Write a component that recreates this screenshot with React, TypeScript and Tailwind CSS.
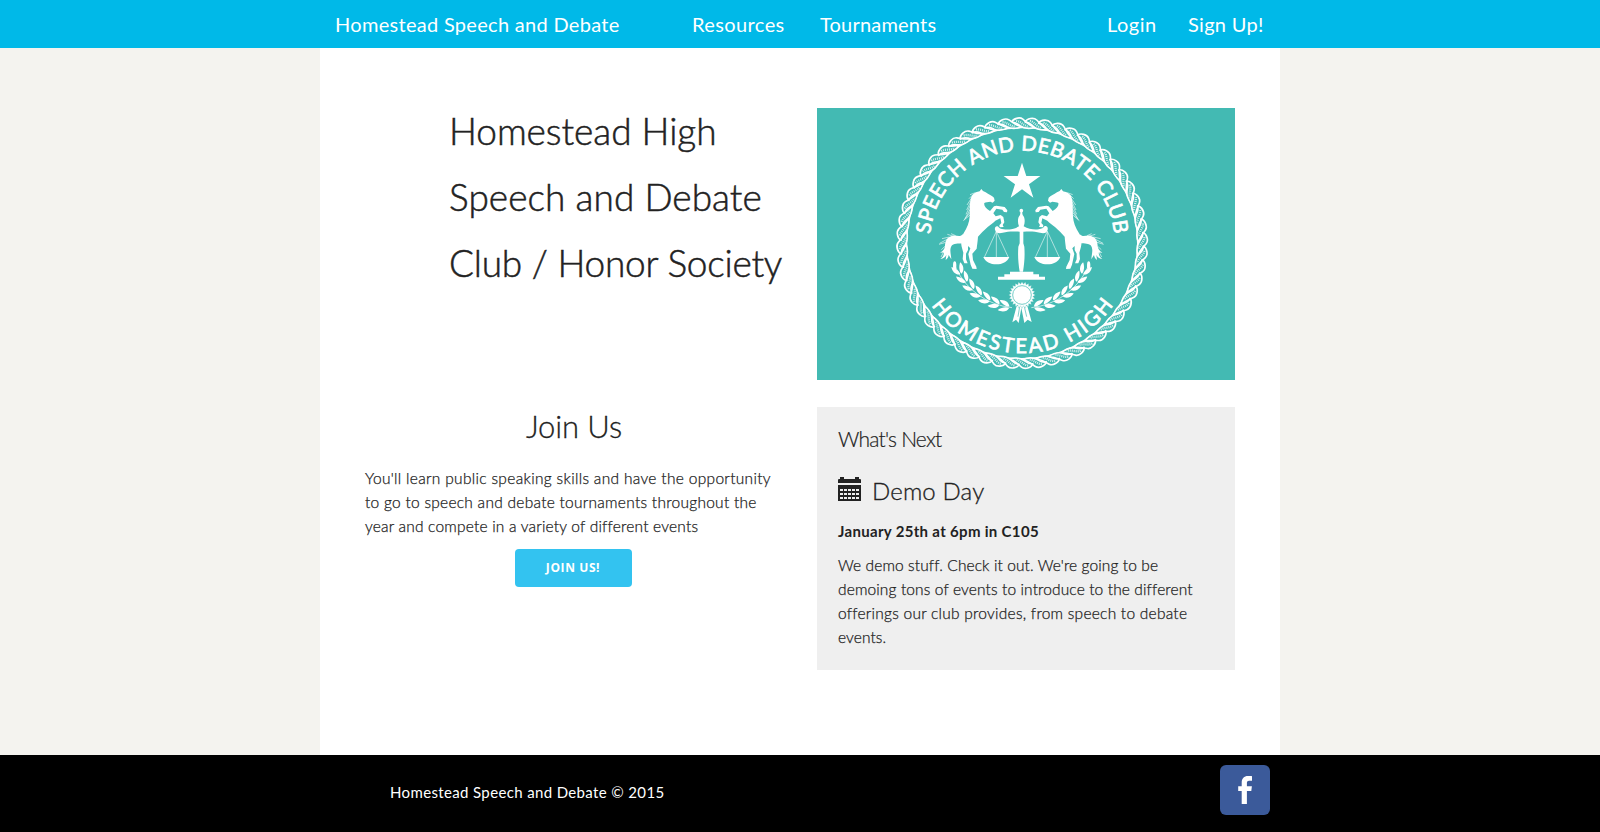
import type { ReactNode } from 'react';

const CX = 636.5;
const CY = 429.5;

function Rope() {
  const count = 56;
  return (
    <g>
      <circle cx={CX} cy={CY} r="347" fill="none" stroke="#fff" strokeWidth="5" />
      {Array.from({ length: count }, (_, i) => (
        <g key={i} transform={`translate(${CX} ${CY}) rotate(${(i * 360) / count})`}>
          <path
            d="M-32 -362 C-28 -374 -8 -380 2 -372 C14 -362 22 -352 38 -347 C22 -343 4 -345 -6 -352 C-14 -358 -20 -364 -32 -362 Z"
            fill="#43bab3"
            stroke="#fff"
            strokeWidth="5"
            strokeLinejoin="round"
          />
          <path d="M-18 -367 C-4 -366 4 -352 20 -349" fill="none" stroke="#fff" strokeWidth="7" strokeDasharray="3 3" opacity="0.8" />
        </g>
      ))}
    </g>
  );
}

function Horse() {
  return (
    <g fill="#fff">
      <path d="M514 267 L519 273 L527 277 C536 284 546 287 552 293 L554 302 L548 308 L541 305 C534 307 527 305 523 309 C521 318 527 325 540 333 L552 319 L559 317 L584 321 L592 331 L591 337 L582 336 L577 329 L559 326 L550 340 L557 349 L572 345 L580 351 L583 367 L578 375 L581 381 L569 382 L568 376 L574 369 L571 355 L556 362 C549 369 541 374 533 381 C522 391 513 400 504 410 C503 425 501 436 500 446 L487 461 L489 480 L499 500 L500 507 L487 506 L482 494 L475 462 L481 445 L474 438 L474 450 L468 461 L468 478 L473 490 L463 490 L458 477 L460 458 L455 440 C452 427 453 412 460 401 C472 383 478 366 479 350 C480 329 478 304 485 289 C491 278 502 275 509 274 Z" />
      <path d="M459 402 C448 415 439 402 425 408 C410 412 405 425 405 439 C402 452 396 454 391 458 C398 457 401 457 402 458 C401 468 397 473 391 477 C401 475 407 470 409 464 L407 480 C414 475 415 470 416 465 L424 478 C423 462 417 448 426 436 C436 427 449 433 460 428 Z" />
      <path
        d="M489 284 L477 296 M486 292 L471 315 M483 303 L470 330 M482 314 L468 343 M481 327 L465 356 M480 337 L463 359 M480 345 L460 362 M496 278 L480 284 M428 408 L412 403 M437 407 L423 401 M418 411 L396 416 M411 418 L389 430 M407 427 L387 433 M405 439 L394 449 M403 452 L393 471"
        fill="none"
        stroke="#fff"
        strokeWidth="1.8"
      />
    </g>
  );
}

function Laurel() {
  const pairs = [0, 1, 2, 3, 4, 5, 6];
  return (
    <g fill="#fff">
      <path d="M436 500 A210 201 0 0 0 606 623" fill="none" stroke="#fff" strokeWidth="2" />
      <ellipse cx="434" cy="497" rx="5" ry="13" />
      {pairs.map((i) => {
        const deg = 152 - i * 8.4;
        const a = (deg * Math.PI) / 180;
        const x = 636 + 210 * Math.cos(a);
        const y = 424 + 201 * Math.sin(a);
        return (
          <g key={i} transform={`translate(${x} ${y}) rotate(${deg + 90})`}>
            <path d="M-4 2 C4 -1 20 5 28 15 C14 20 -1 14 -4 2 Z" />
            <path d="M-4 -2 C4 1 20 -5 28 -15 C14 -20 -1 -14 -4 -2 Z" />
          </g>
        );
      })}
    </g>
  );
}

function Scales() {
  return (
    <g fill="#fff">
      <circle cx="634" cy="332" r="5.5" />
      <path d="M632 335 H636 L638 345 C645 352 646 366 641 379 C655 388 674 390 686 388 C695 386 701 384 703 379 C709 376 715 381 713 389 C711 400 700 401 690 398 C672 393 656 394 640 395 L640 430 L643 440 C645 468 643 490 639 515 H629 C625 490 623 468 625 440 L629 430 L629 395 C612 394 596 393 578 398 C568 401 557 400 555 389 C553 381 559 376 565 380 C567 385 573 387 581 388 C594 390 613 388 627 379 C622 366 623 352 630 345 Z" />
      <path d="M600 515 H670 V523 H687 V530 H705 V539 H564 V530 H583 V523 H600 Z" />
      {[559, 712].map((x) => (
        <g key={x}>
          <path d={`M${x - 36} 472 L${x} 394 L${x + 36} 472 M${x} 394 V472`} fill="none" stroke="#fff" strokeWidth="1.7" />
          <path d={`M${x - 39} 471 H${x + 39} C${x + 33} 486 ${x + 18} 493 ${x} 493 C${x - 18} 493 ${x - 33} 486 ${x - 39} 471 Z`} />
        </g>
      ))}
    </g>
  );
}

function starPoints(cx: number, cy: number, n: number, outer: number, inner: number) {
  return Array.from({ length: n * 2 }, (_, i) => {
    const r = i % 2 === 0 ? outer : inner;
    const a = (Math.PI * i) / n - Math.PI / 2;
    return `${cx + r * Math.cos(a)},${cy + r * Math.sin(a)}`;
  }).join(' ');
}

function Crest() {
  return (
    <svg className="block h-[272px] w-[418px] bg-[#43bab3]" viewBox="21 24 1254 816" role="img">
      <defs>
        <path id="arc-top" d="M359 429.5 A277.5 277.5 0 0 1 914 429.5" />
        <path id="arc-bottom" d="M306.5 429.5 A330 330 0 0 0 966.5 429.5" />
      </defs>
      <Rope />
      <g className="font-['Lato',sans-serif]" fill="#fff" stroke="#fff" strokeWidth="2.2" fontSize="61">
        <text textLength="818" lengthAdjust="spacing">
          <textPath href="#arc-top" startOffset="27" textLength="818" lengthAdjust="spacing">SPEECH AND DEBATE CLUB</textPath>
        </text>
        <text textLength="642" lengthAdjust="spacing">
          <textPath href="#arc-bottom" startOffset="198" textLength="642" lengthAdjust="spacing">HOMESTEAD HIGH</textPath>
        </text>
      </g>
      <polygon points={starPoints(636, 246, 5, 58, 22)} fill="#fff" />
      <Horse />
      <g transform="translate(1268 0) scale(-1 1)">
        <Horse />
      </g>
      <Scales />
      <Laurel />
      <g transform="translate(1270 0) scale(-1 1)">
        <Laurel />
      </g>
      <g fill="#fff">
        <path d="M620 618 L607 667 L618 659 L626 669 L634 624 L643 669 L653 659 L665 666 L652 618 Z" />
        <path d="M629 620 L624 650 M643 620 L650 650" stroke="#43bab3" strokeWidth="2" />
        <polygon points={starPoints(636, 585, 24, 40, 33)} stroke="#43bab3" strokeWidth="1" />
        <circle cx="636" cy="585" r="28" fill="none" stroke="#43bab3" strokeWidth="2.2" />
      </g>
    </svg>
  );
}

function CalendarIcon() {
  return (
    <svg className="mt-[2px] block h-6 w-[23px] shrink-0" viewBox="0 0 23 24" fill="#222">
      <path d="M2 0h4v2h11V0h4v2h1a1 1 0 0 1 1 1v3H0V3a1 1 0 0 1 1-1h1z" />
      <path
        fillRule="evenodd"
        d="M0 8h23v16H0zM2 12v2h3v-2zM6 12v2h3v-2zM10 12v2h3v-2zM14 12v2h3v-2zM18 12v2h3v-2zM2 16v2h3v-2zM6 16v2h3v-2zM10 16v2h3v-2zM14 16v2h3v-2zM18 16v2h3v-2zM2 20v2h3v-2zM6 20v2h3v-2zM10 20v2h3v-2zM14 20v2h3v-2zM18 20v2h3v-2z"
      />
    </svg>
  );
}

function Line({ className, children }: { className: string; children: ReactNode }) {
  return <span className={`block whitespace-nowrap ${className}`}>{children}</span>;
}

export default function App() {
  return (
    <div className="flex h-[832px] flex-col bg-[#f4f3ef] font-['Lato',sans-serif] text-[#222]">
      <nav className="h-12 bg-[#00b9e8]">
        <div className="mx-auto flex h-12 w-[960px] pl-[15px] text-xl leading-[48px] whitespace-nowrap text-white">
          <a className="w-[357px] tracking-[0.3px]">Homestead Speech and Debate</a>
          <a className="w-[128px] tracking-[0.4px]">Resources</a>
          <a className="w-[287px] tracking-[0.2px]">Tournaments</a>
          <a className="w-[81px] tracking-[0.5px]">Login</a>
          <a className="tracking-[0.3px]">Sign Up!</a>
        </div>
      </nav>

      <main className="mx-auto flex h-[707px] w-[960px] gap-[34px] bg-white pl-[45px]">
        <section className="w-[418px]">
          <h1 className="pt-[50px] pl-[84px] text-[37px] leading-[66px] font-light [-webkit-text-stroke:0.5px_#222]">
            <Line className="tracking-[-0.05px]">Homestead High</Line>
            <Line className="tracking-[0.05px]">Speech and Debate</Line>
            <Line className="tracking-[-0.23px]">Club / Honor Society</Line>
          </h1>
          <h2 className="mt-[112px] text-center text-[31px] leading-9 font-light tracking-[-0.1px] [-webkit-text-stroke:0.3px_#222]">Join Us</h2>
          <p className="mt-[22px] text-[15.5px] leading-6 font-light [-webkit-text-stroke:0.25px_#222]">
            <Line className="tracking-[0.32px]">You'll learn public speaking skills and have the opportunity</Line>
            <Line className="tracking-[0.27px]">to go to speech and debate tournaments throughout the</Line>
            <Line className="tracking-[0.2px]">year and compete in a variety of different events</Line>
          </p>
          <div className="mt-[11px] flex justify-center pr-[2px]">
            <button className="h-[38px] w-[117px] rounded bg-[#33c3f0] font-['Open_Sans',sans-serif] text-xs font-bold tracking-[0.6px] text-white">
              JOIN US!
            </button>
          </div>
        </section>

        <section className="w-[418px] pt-[60px]">
          <Crest />
          <div className="mt-[27px] h-[263px] bg-[#efefef] pt-[18px] pl-[21px]">
            <h5 className="text-[21px] leading-7 font-light tracking-[-0.8px] [-webkit-text-stroke:0.2px_#222]">What's Next</h5>
            <div className="mt-[22px] flex h-[30px]">
              <CalendarIcon />
              <h4 className="mt-px ml-[11px] text-2xl leading-[30px] font-light tracking-[0.15px] [-webkit-text-stroke:0.3px_#222]">Demo Day</h4>
            </div>
            <p className="mt-[14px] text-[15px] leading-6 font-bold tracking-[0.32px]">January 25th at 6pm in C105</p>
            <p className="mt-[10px] text-[15.5px] leading-6 font-light [-webkit-text-stroke:0.25px_#222]">
              <Line className="tracking-[0.11px]">We demo stuff. Check it out. We're going to be</Line>
              <Line className="tracking-[0.13px]">demoing tons of events to introduce to the different</Line>
              <Line className="tracking-[0.25px]">offerings our club provides, from speech to debate</Line>
              <Line className="tracking-[0.1px]">events.</Line>
            </p>
          </div>
        </section>
      </main>

      <footer className="h-[77px] bg-black">
        <div className="mx-auto flex w-[960px] items-start justify-between pt-[10px] pr-[10px] pl-[70px]">
          <p className="mt-[15px] text-[15px] leading-6 tracking-[0.36px] text-white">Homestead Speech and Debate © 2015</p>
          <svg className="block h-[50px] w-[50px]" viewBox="0 0 50 50">
            <rect width="50" height="50" rx="6" fill="#3b5a9a" />
            <path
              d="M32 11.2v4.6h-2.800c-2 0-2.300 1-2.300 2.400v3h5l-.6 4.900h-4.400v13h-5.200v-13h-3.500v-4.900h3.500v-3.600c0-4 2.400-6.500 6.300-6.500 1.800 0 3.300.05 4 .1z"
              fill="#fff"
            />
          </svg>
        </div>
      </footer>
    </div>
  );
}
